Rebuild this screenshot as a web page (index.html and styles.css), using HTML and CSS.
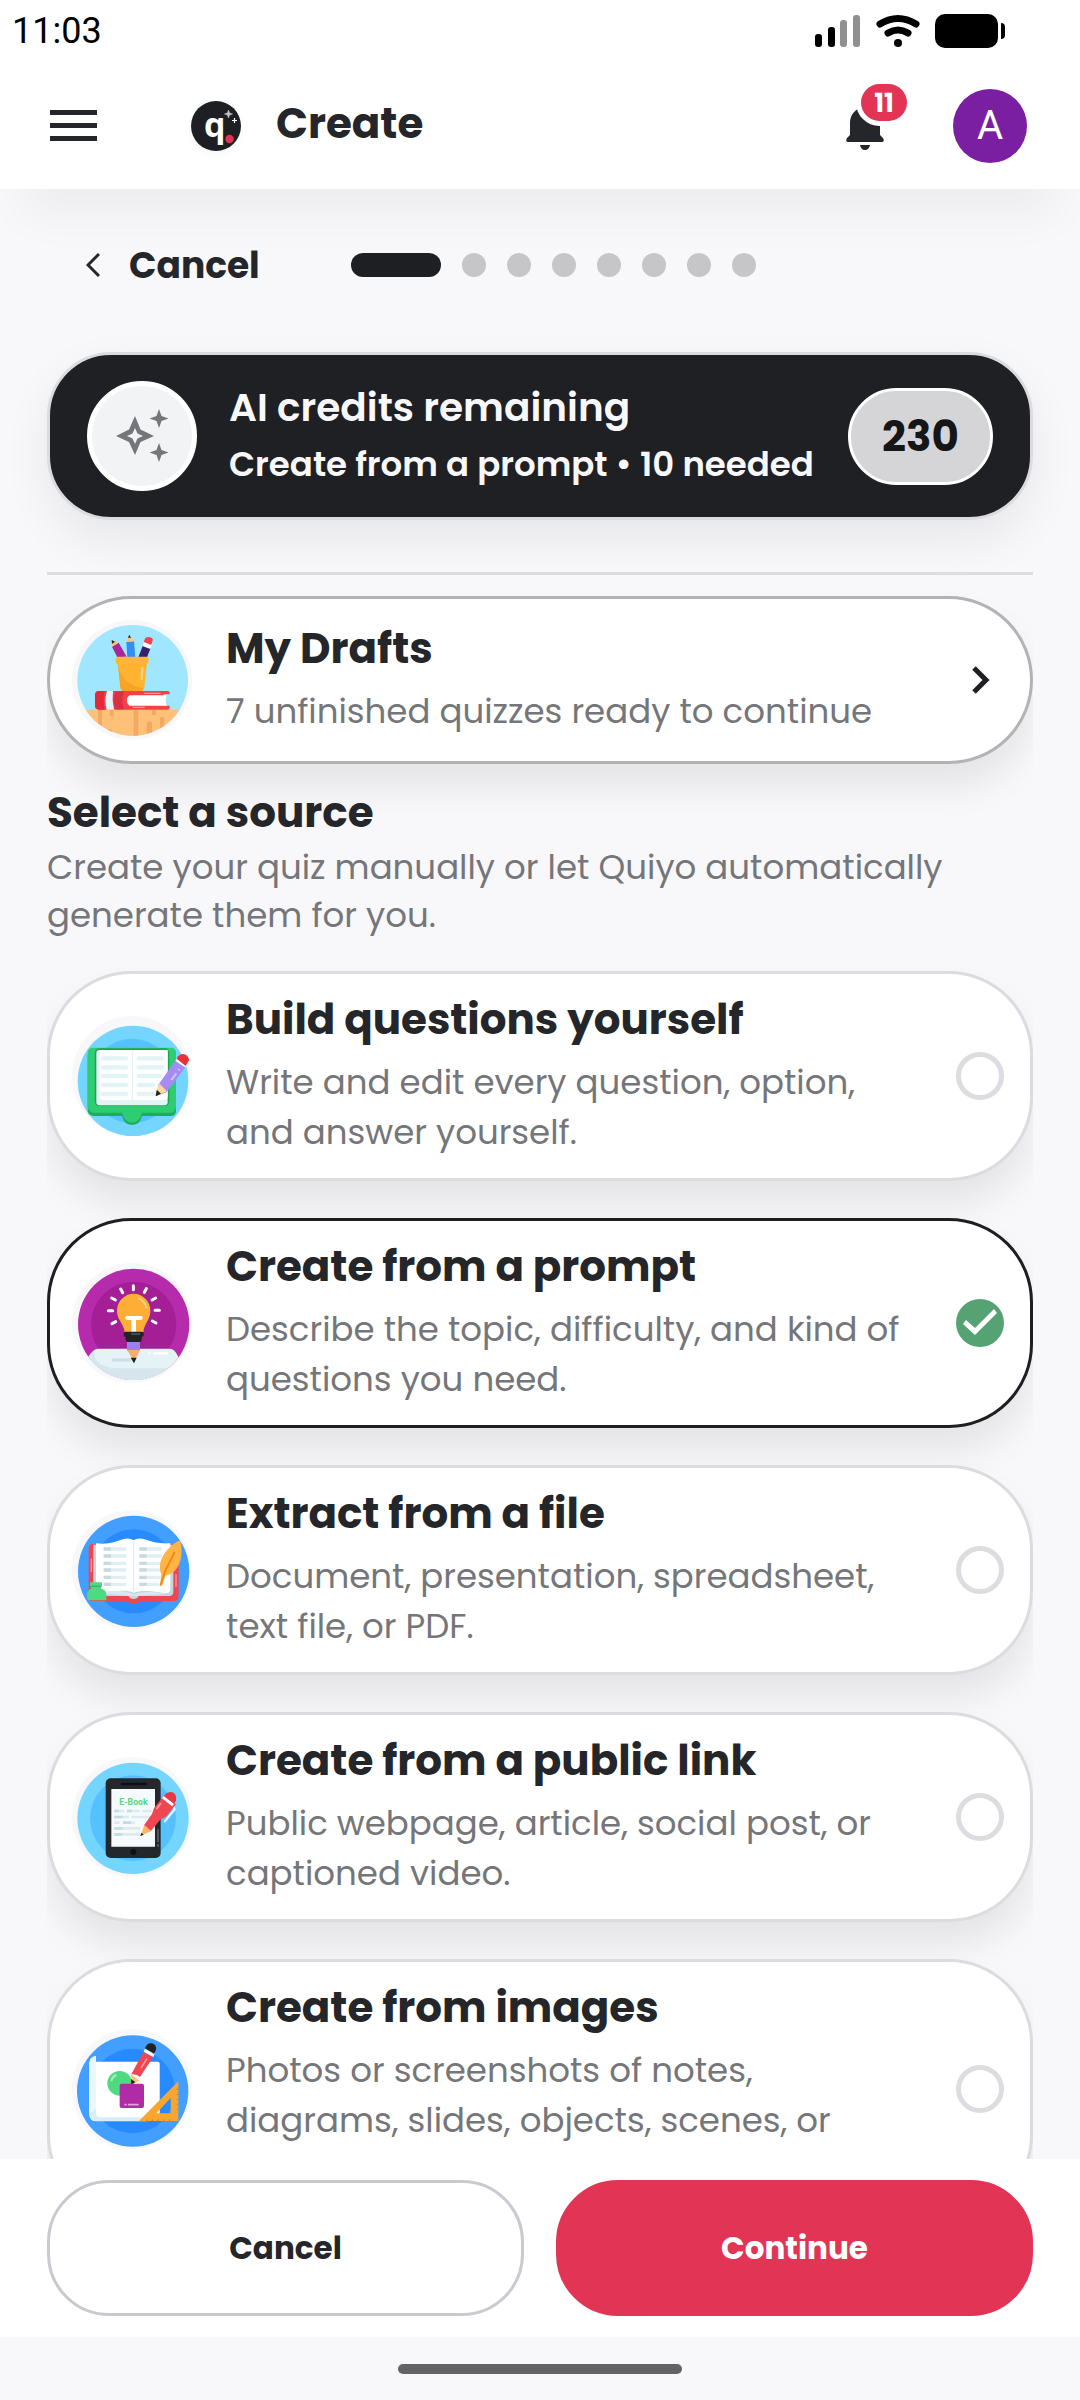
FILE: index.html
```html
<!DOCTYPE html>
<html lang="en">
<head>
    <meta charset="UTF-8">
    <meta name="viewport" content="width=device-width, initial-scale=1.0">
    <title>Create</title>
    <link rel="stylesheet" href="styles.css">
</head>
<body>
    <div class="status-bar">
        <span class="time">11:03</span>
        <div class="status-icons">
            <svg width="46" height="34" viewBox="0 0 46 34">
                <rect x="0" y="20" width="7" height="13" rx="3"/>
                <rect x="13" y="13" width="7" height="20" rx="3"/>
                <rect x="25" y="6" width="7" height="27" rx="3" fill="#909090"/>
                <rect x="38" y="1" width="7" height="32" rx="3" fill="#909090"/>
            </svg>
            <svg width="44" height="34" viewBox="0 0 44 34">
                <path d="M4 10Q22-1 40 10M12 19Q22 13 32 19" fill="none" stroke="#000" stroke-width="7" stroke-linecap="round"/>
                <circle cx="22" cy="29" r="4"/>
            </svg>
            <svg width="70" height="34" viewBox="0 0 70 34">
                <rect width="63" height="34" rx="10"/>
                <path d="M66 9q4 0 4 4v8q0 4-4 4z"/>
            </svg>
        </div>
    </div>

    <header class="header">
        <button class="icon-btn menu" aria-label="Menu">
            <svg width="47" height="32" viewBox="0 0 47 32" fill="#242629"><path d="M0 0h47v5H0zM0 13h47v5H0zM0 26h47v5H0z"/></svg>
        </button>
        <svg class="logo" width="50" height="50" viewBox="0 0 50 50">
            <circle cx="25" cy="25" r="25" fill="#1d1f22"/>
            <text x="13" y="36" class="logo-letter">q</text>
            <circle cx="38.500" cy="38" r="4.200" fill="#e23455"/>
            <path d="M37.500 9l1 3 3 1-3 1-1 3-1-3-3-1 3-1z" fill="#c4c4c6" stroke="#c4c4c6" stroke-width=".6"/>
            <path d="M43.500 17v5M41 19.500h5" stroke="#fff" stroke-width="1.200"/>
        </svg>
        <h1 class="page-title">Create</h1>
        <button class="icon-btn bell" aria-label="Notifications">
            <svg width="38" height="48" viewBox="0 0 38 48" fill="#242629">
                <path d="M19 4C10 6 4 12 4 21v12l-3 3q-2 4 1 4h34q3 0 1-4l-3-3V21C34 12 28 6 19 4zM14 43h10q-1 5-5 5t-5-5z"/>
            </svg>
            <span class="badge">11</span>
        </button>
        <button class="avatar">A</button>
    </header>

    <main class="main">
        <nav class="steps">
            <button class="back">
                <svg width="14" height="24" viewBox="0 0 14 24"><path d="M13 1L2 12l11 11" fill="none" stroke="#242629" stroke-width="3"/></svg>
                Cancel
            </button>
            <div class="dots">
                <span class="dot active"></span>
                <span class="dot"></span>
                <span class="dot"></span>
                <span class="dot"></span>
                <span class="dot"></span>
                <span class="dot"></span>
                <span class="dot"></span>
                <span class="dot"></span>
            </div>
        </nav>

        <section class="credits">
            <div class="credits-icon">
                <svg width="54" height="56" viewBox="0 0 54 56" fill="#75767a">
                    <path fill-rule="evenodd" d="M20 8l5.500 13.500L39 28l-13.500 6L20 47l-6-13L1 28l13-6.500zM20 20l-2.500 5.500L12 28l5.500 2.500L20 36l2.500-5.500L28 28l-5.500-2.500z"/>
                    <path d="M44 1l2.500 7 7 2.500-7 2.500-2.500 7-2.500-7-7-2.500 7-2.500zM44 35l2.500 7 7 2.500-7 2.500-2.500 7-2.500-7-7-2.500 7-2.500z"/>
                </svg>
            </div>
            <div class="credits-text">
                <p class="credits-title">AI credits remaining</p>
                <p class="credits-sub">Create from a prompt • 10 needed</p>
            </div>
            <span class="credits-count">230</span>
        </section>

        <div class="content">
            <a class="card drafts" href="#">
                <svg class="art" viewBox="126 120 360 360">
                    <defs><clipPath id="desk"><circle cx="308" cy="301" r="166"/></clipPath></defs>
                    <circle cx="306" cy="300" r="180" fill="#f8f8fa"/>
                    <circle cx="308" cy="301" r="166" fill="#a0e6ff"/>
                    <g clip-path="url(#desk)">
                        <path d="M126 389h360v100H126z" fill="#ffc078"/>
                        <path d="M204 389h12v46h-12zM239 389h12v20h-12zM311 389h14v90h-14zM366 389h12v16h-12zM350 428q8-10 16 0v40h-16zM390 412h13v50h-13zM233 448h12v30h-12z" fill="#f3a964"/>
                    </g>
                    <path d="M246 200l20-12 24 42-28 2z" fill="#a8279c"/>
                    <path d="M246 200l-1-20 21 8z" fill="#ffc078"/><path d="M245 180l10 5-9 6z" fill="#222"/>
                    <path d="M289 186l23-2 4 48h-24z" fill="#348cf5"/><path d="M289 186l9-20 14 18z" fill="#ffc078"/><path d="M298 164l5 9h-9z" fill="#222"/>
                    <path d="M340 193l22 10-11 29h-26z" fill="#35206b"/><path d="M337 198l7-17 23 9-6 17z" fill="#fff"/><path d="M341 186l5-12q14-7 23 4l-5 17z" fill="#ef4350"/>
                    <path d="M262 240h90l-9 82q-1 12-12 12h-47q-12 0-13-12z" fill="#ffb330"/>
                    <path d="M264 250c4 44 34 68 76 75l-4 8h-52q-12 0-13-12z" fill="#f7a327"/>
                    <rect x="257" y="230" width="99" height="22" rx="7" fill="#ffb43b"/>
                    <path d="M337 262l-2 38" stroke="#ffd37f" stroke-width="7"/>
                    <path d="M207 333h205q9 0 7 10h-18v34h18q2 12-8 12H207q-12 0-12-13v-30q0-13 12-13z" fill="#f0414c"/>
                    <path d="M207 333h17q-6 28 0 56h-17q-12 0-12-13v-30q0-13 12-13z" fill="#e12b37"/>
                    <path d="M231 333h18q-4 28 3 56h-22q-8-28 1-56z" fill="#e8f3f7"/>
                    <path d="M257 334h25q-9 28 0 54h-25q-12-27 0-54z" fill="#db303f"/>
                    <path d="M298 346h112q-6 16 0 31H298q-16-15 0-31z" fill="#fff"/>
                    <path d="M342 340h50M308 382h36" stroke="#f998a0" stroke-width="4"/>
                </svg>
                <div class="card-text">
                    <h2 class="card-title">My Drafts</h2>
                    <p class="card-desc">7 unfinished quizzes ready to continue</p>
                </div>
                <span class="card-end"><svg width="20" height="30" viewBox="0 0 20 30"><path d="M4 3l12 12L4 27" fill="none" stroke="#1d1f22" stroke-width="5"/></svg></span>
            </a>

            <h2 class="section-title">Select a source</h2>
            <p class="section-desc">Create your quiz manually or let Quiyo automatically generate them for you.</p>

            <form class="sources" id="sources">
                <label class="card">
                    <svg class="art" viewBox="126 168 360 360">
                        <circle cx="306" cy="348" r="180" fill="#f8f8fa"/>
                        <circle cx="309" cy="363" r="166" fill="#74d6ff"/>
                        <circle cx="306" cy="363" r="127" fill="#55c2ff"/>
                        <path d="M190 270h234q14 0 14 14v168q0 16-16 16h-86q-6 26-30 27-24-1-30-27h-86q-17-2-17-18V286q0-16 17-16z" fill="#1bae57"/>
                        <path d="M190 263h232q16 0 16 14v163q-2 18-18 18h-84q-6 28-30 30-24-2-30-30h-86q-15-3-17-18V280q0-17 17-17z" fill="#2fcd72"/>
                        <rect x="194" y="265" width="224" height="173" rx="14" fill="#1ba655"/>
                        <rect x="199" y="270" width="214" height="166" rx="10" fill="#e4f4f6"/>
                        <path d="M209 270h96v150h-85q-11 0-11-12zM309 270h104v138q0 12-12 12h-92z" fill="#fff"/>
                        <path d="M218 295h70M218 322h70M218 348h70M218 375h70M218 402h70M326 295h70M326 322h70M326 348h66M326 375h44M326 402h46" stroke="#e2f4f6" stroke-width="13" stroke-linecap="round"/>
                        <path d="M435 303l30 20-55 74-31 11 6-34z" fill="#a78bf5"/>
                        <path d="M387 370l24 24-33 14z" fill="#ffd898"/><path d="M380 389l13 12-16 8z" fill="#222"/>
                        <path d="M436 302l30 20 5-10-28-20z" fill="#fff"/>
                        <path d="M440 296q6-14 20-14 16 3 17 19l-10 17z" fill="#ea303a"/>
                        <path d="M424 360l15-20M445 331l3-4" stroke="#d3c4ff" stroke-width="6"/>
                    </svg>
                    <div class="card-text">
                        <h3 class="card-title">Build questions yourself</h3>
                        <p class="card-desc">Write and edit every question, option, and answer yourself.</p>
                    </div>
                    <span class="card-end"><input class="radio" type="radio" name="source"></span>
                </label>

                <label class="card selected">
                    <svg class="art" viewBox="126 189 360 360">
                        <defs><clipPath id="bulb"><circle cx="311" cy="373" r="167"/></clipPath></defs>
                        <circle cx="306" cy="369" r="180" fill="#f8f8fa"/>
                        <circle cx="311" cy="373" r="167" fill="#b52bab"/>
                        <circle cx="311" cy="373" r="128" fill="#a41f95"/>
                        <g clip-path="url(#bulb)">
                            <path d="M204 446h216q14 0 24 23l4 80H170l6-80q14-23 28-23z" fill="#e5f3f7"/>
                            <path d="M194 450c-8 40 30 55 80 55h150v45H160l16-80z" fill="#d6e6ec"/>
                        </g>
                        <path d="M246 480h56" stroke="#cfdfe6" stroke-width="9"/>
                        <path d="M310 257v12M272 267l6 11M349 266l-6 11M245 294l11 6M377 294l-11 6M235 332h13M375 331h13M246 371l11-6M378 369l-11-6" stroke="#fff" stroke-width="9" stroke-linecap="round"/>
                        <path d="M311 281a51 51 0 0 1 50 51c0 28-18 36-21 64h-56c-3-28-23-36-23-64a51 51 0 0 1 50-51z" fill="#ffae35"/>
                        <path d="M325 294q20 10 25 30" fill="none" stroke="#ffdc9b" stroke-width="5"/>
                        <path d="M289 348h45q4 0 4 6t-10 6h-10v38h-14v-38h-8q-11-1-11-6t4-6z" fill="#fff"/>
                        <rect x="281" y="395" width="60" height="16" rx="6" fill="#202225"/>
                        <path d="M287 409h48v10q-2 8-12 8h-25q-10-1-11-8z" fill="#202225"/><path d="M303 402h28" stroke="#6d7074" stroke-width="3"/>
                        <path d="M291 426h39v26h-39z" fill="#a37cf0"/><path d="M292 450h38l-18 37z" fill="#f7ad72"/><path d="M302 473h18l-8 17z" fill="#222"/>
                        <path d="M370 460h44M356 460h5" stroke="#fff" stroke-width="7"/>
                    </svg>
                    <div class="card-text">
                        <h3 class="card-title">Create from a prompt</h3>
                        <p class="card-desc">Describe the topic, difficulty, and kind of questions you need.</p>
                    </div>
                    <span class="card-end"><input class="radio" type="radio" name="source" checked></span>
                </label>

                <label class="card">
                    <svg class="art" viewBox="126 180 360 360">
                        <circle cx="306" cy="360" r="180" fill="#f8f8fa"/>
                        <circle cx="311" cy="364" r="167" fill="#429fff"/>
                        <circle cx="311" cy="364" r="126" fill="#278aff"/>
                        <path d="M188 282h246q12 0 12 12v146q0 13-13 13H330q-6 9-19 9t-19-9H184q-8 0-8-12V294q0-12 12-12z" fill="#f04652"/>
                        <path d="M190 284h240v142q0 12-12 12h-92q-4 9-15 9t-15-9H190z" fill="#bfd7df"/>
                        <path d="M198 280c36 4 60-4 80-12q20-6 33 3 12-9 33-3c20 8 45 14 77 12v138q0 12-14 12c-50-8-75-10-96-2-20-10-64-6-113 2z" fill="#fff"/>
                        <path d="M198 430c60-12 92-6 113 4 20-10 60-10 98-2l-94 6h-9z" fill="#dbe9ed"/>
                        <path d="M311 272v150" stroke="#e3edf0" stroke-width="4"/>
                        <path d="M221 297h68M221 318h68M221 340h68M221 360h68M221 382h68M221 403h68M328 297h68M328 318h68M328 340h68M328 360h66M328 382h64M328 403h60" stroke="#e2eff2" stroke-width="10"/>
                        <path d="M221 297h22M221 318h22M221 340h22M221 360h22M221 382h22M221 403h22M328 297h22M328 318h22M328 340h22M328 360h22M328 382h22M328 403h22" stroke="#c8dade" stroke-width="10"/>
                        <path d="M445 273c-36 20-66 60-51 100l-4 34h6l10-30c50-10 54-70 45-104z" fill="#ffb445"/>
                        <path d="M434 306l-30 60-12 40" fill="none" stroke="#f18c0d" stroke-width="6"/>
                        <path d="M184 326v40M438 372v38" stroke="#ff9aa3" stroke-width="4"/>
                        <path d="M180 397h36v12l-4 6c10 4 17 9 17 18v18h-48q-10 0-10-11c0-14 4-20 13-25l-4-8z" fill="#50d981"/>
                        <path d="M182 409h30" stroke="#2ab863" stroke-width="4"/>
                    </svg>
                    <div class="card-text">
                        <h3 class="card-title">Extract from a file</h3>
                        <p class="card-desc">Document, presentation, spreadsheet, text file, or PDF.</p>
                    </div>
                    <span class="card-end"><input class="radio" type="radio" name="source"></span>
                </label>

                <label class="card">
                    <svg class="art" viewBox="126 171 360 360">
                        <circle cx="306" cy="351" r="180" fill="#f8f8fa"/>
                        <circle cx="309" cy="355" r="167" fill="#74d6ff"/>
                        <circle cx="309" cy="355" r="129" fill="#55c2ff"/>
                        <rect x="227" y="235" width="165" height="239" rx="15" fill="#24282c"/>
                        <path d="M244 267h131v173H244z" fill="#f5fbfc"/>
                        <path d="M276 252h50M334 252h12" stroke="#0c0e10" stroke-width="8" stroke-linecap="round"/>
                        <circle cx="310" cy="456" r="9" fill="#0c0e10"/>
                        <path d="M384 388v38M384 432v8" stroke="#6b7075" stroke-width="4"/>
                        <text x="268" y="314" class="ebook">E-Book</text>
                        <path d="M253 333h29M291 333h38M337 333h28M253 351h44M304 351h60M253 368h16M279 368h36M253 385h78M253 403h78" stroke="#dcebef" stroke-width="8"/>
                        <path d="M253 333h14M291 333h14M253 351h24M279 368h24M253 385h24M253 403h24" stroke="#c3dbe2" stroke-width="8"/>
                        <path d="M430 320l4 8-31 38" fill="none" stroke="#e9f5fa" stroke-width="6"/>
                        <path d="M404 284l-32 40-6 18-24 34 20 18 30-36 16-8 30-38z" fill="#f04652"/>
                        <path d="M403 286q12-15 28-8 10 8 7 24l-8 11z" fill="#e93842"/>
                        <path d="M401 288l31 24-6 7-30-24z" fill="#fff"/>
                        <path d="M343 375l21 18-32 14z" fill="#ffb466"/><path d="M334 398l7 6-10 4z" fill="#222"/>
                        <path d="M393 310l-14 18" stroke="#ff9aa3" stroke-width="5"/>
                    </svg>
                    <div class="card-text">
                        <h3 class="card-title">Create from a public link</h3>
                        <p class="card-desc">Public webpage, article, social post, or captioned video.</p>
                    </div>
                    <span class="card-end"><input class="radio" type="radio" name="source"></span>
                </label>

                <label class="card">
                    <svg class="art" viewBox="126 264 360 360">
                        <circle cx="306" cy="444" r="180" fill="#f8f8fa"/>
                        <circle cx="308" cy="450" r="167" fill="#429fff"/>
                        <circle cx="308" cy="450" r="127" fill="#278aff"/>
                        <path d="M180 362h203q6 0 6 6v172H200q-22 0-22-22z" fill="#fff"/>
                        <path d="M198 345q-20 3-20 22v151q0 23 22 23h150v-12H210q-12 0-12-12z" fill="#daeef6"/>
                        <path d="M198 345v158q-10 2-14 14l-6-4V367q0-19 20-22z" fill="#eaf7fb"/>
                        <circle cx="269" cy="427" r="37" fill="#50d981"/>
                        <path d="M244 420q3-14 15-18" fill="none" stroke="#a5f0c0" stroke-width="6"/>
                        <path d="M303 400l25 19-22 11z" fill="#ffc078"/><path d="M303 414l13 9-12 9z" fill="#222"/>
                        <path d="M340 333l30 14-40 61q-10-10-26-8z" fill="#ef4652"/>
                        <path d="M341 332l4-9 29 15-4 10z" fill="#fff"/>
                        <path d="M345 322q6-18 21-15 15 5 12 20l-6 11z" fill="#222"/>
                        <path d="M351 353l-18 28" stroke="#ff9aa3" stroke-width="5"/>
                        <rect x="269" y="428" width="73" height="73" rx="6" fill="#b02ba5"/>
                        <path d="M283 491h7M294 491h32" stroke="#e2a2dc" stroke-width="5"/>
                        <path fill-rule="evenodd" d="M445 421v119H327zM422 471l-43 46h43z" fill="#f9a62e"/>
                        <path d="M440 445h5M440 460h5M440 475h5M440 490h5M440 505h5M350 535v5M367 535v5M384 535v5M401 535v5M418 535v5" stroke="#d57f0b" stroke-width="3"/>
                    </svg>
                    <div class="card-text">
                        <h3 class="card-title">Create from images</h3>
                        <p class="card-desc">Photos or screenshots of notes, diagrams, slides, objects, scenes, or more.</p>
                    </div>
                    <span class="card-end"><input class="radio" type="radio" name="source"></span>
                </label>
            </form>
        </div>
    </main>

    <footer class="actions">
        <button class="btn btn-outline" type="button">Cancel</button>
        <button class="btn btn-primary" type="submit" form="sources">Continue</button>
    </footer>
    <div class="home-bar"><span class="home-handle"></span></div>
</body>
</html>
```
FILE: styles.css
```css
* { box-sizing: border-box; }
body { margin: 0; height: 100vh; display: flex; flex-direction: column; overflow: hidden; font-family: Poppins, Inter, sans-serif; color: #242629; background: #f8f8fa; }
h1, h2, h3, p { margin: 0; }
button { font-family: inherit; color: inherit; border: 0; padding: 0; background: none; cursor: pointer; }
svg { display: block; flex-shrink: 0; }

/* status bar */
.status-bar { display: flex; justify-content: space-between; align-items: center; height: 62px; padding: 0 75px 0 12px; background: #fff; position: relative; z-index: 2; }
.time { font-family: Roboto, sans-serif; font-size: 36px; color: #000; }
.status-icons { display: flex; gap: 15px; }

/* header */
.header { display: flex; align-items: center; height: 127px; padding: 0 53px 0 50px; background: #fff; position: relative; z-index: 1; box-shadow: 0 48px 48px -24px rgba(0,0,0,0.05); }
.logo { margin-left: 94px; border-radius: 50%; box-shadow: 0 4px 8px rgba(0,0,0,0.04); overflow: visible; }
.logo-letter { font: bold 34px "Open Sans", sans-serif; fill: #fff; }
.page-title { flex: 1; margin-left: 35px; padding-bottom: 4px; font-size: 42px; font-weight: 700; line-height: 50px; }
.bell { position: relative; margin-right: 69px; }
.badge { position: absolute; left: 15px; top: -18px; width: 46px; height: 37px; border-radius: 19px; background: #e23455; box-shadow: 0 0 0 5px #fff; color: #fff; font-size: 26px; font-weight: 700; line-height: 38px; text-align: center; }
.avatar { width: 74px; height: 74px; border-radius: 50%; background: #7b1fa2; color: #fff; font-family: Roboto, sans-serif; font-size: 40px; }

/* main */
.main { flex: 1; min-height: 0; overflow: hidden; }
.steps { display: flex; align-items: center; gap: 91px; height: 72px; margin: 40px 86px 51px; }
.back { display: flex; align-items: center; gap: 29px; font-size: 36px; font-weight: 700; }
.dots { display: flex; gap: 21px; }
.dot { width: 24px; height: 24px; border-radius: 12px; background: #c6c6c8; }
.dot.active { width: 90px; background: #1d1f22; }

.credits { display: flex; align-items: center; height: 168px; margin: 0 47px; padding: 0 37px; border: 3px solid #dcdce0; border-radius: 64px; background: #1f2024; box-shadow: 0 20px 48px rgba(0,0,0,0.07); color: #f8f8fa; }
.credits-icon { display: flex; align-items: center; justify-content: center; width: 110px; height: 110px; border: 5px solid #fff; border-radius: 50%; background: #f2f3f4; }
.credits-text { flex: 1; margin-left: 32px; line-height: 50px; white-space: nowrap; }
.credits-title { font-size: 39px; font-weight: 600; margin-bottom: 6px; }
.credits-sub { font-size: 34px; font-weight: 600; }
.credits-count { width: 145px; height: 97px; border: 3px solid #fff; border-radius: 49px; background: #d5d5d8; color: #151618; font-size: 42px; font-weight: 700; line-height: 91px; text-align: center; }

.content { margin: 52px 47px 0; padding-top: 21px; border-top: 3px solid #dcdce0; overflow: hidden; }
.card { display: flex; align-items: center; padding: 21px 26px 21px 22px; border: 3px solid #dcdce0; border-radius: 84px; background: #fff; box-shadow: 0 24px 36px rgba(0,0,0,0.08); color: #242629; text-decoration: none; cursor: pointer; }
.card.drafts { min-height: 168px; border-color: #b3b3b6; }
.card.selected { border-color: #1d1f22; }
.art { width: 120px; height: 120px; }
.ebook { font: bold 26px Roboto, sans-serif; fill: #50d981; }
.card-text { flex: 1; margin: 0 40px 0 34px; line-height: 50px; }
.card-title { font-size: 42px; font-weight: 700; margin-bottom: 12px; }
.card-desc { font-size: 34px; color: #75767a; }
.card-end { display: flex; justify-content: center; width: 48px; }
.radio { appearance: none; width: 48px; height: 48px; margin: 0; border: 5px solid #dcdce1; border-radius: 50%; }
.radio:checked { border: 0; background: #55a272; }
.radio:checked::after { content: ""; display: block; width: 48px; height: 48px; background: #fff; clip-path: polygon(7px 25px, 10px 21px, 19px 29px, 38px 10px, 41px 14px, 19px 36px); }

.section-title { margin-top: 25px; font-size: 42px; font-weight: 700; line-height: 48px; }
.section-desc { margin: 6px 0 32px; font-size: 34px; line-height: 48px; color: #75767a; }
.sources { display: flex; flex-direction: column; gap: 37px; }

/* bottom actions */
.actions { display: flex; gap: 32px; padding: 21px 47px; background: #fff; }
.btn { flex: 1; height: 136px; border: 3px solid #c9c9cf; border-radius: 62px; font-size: 31px; font-weight: 700; }
.btn-primary { border-color: #e23455; background: #e23455; color: #fff; }
.home-bar { display: flex; justify-content: center; height: 63px; padding-top: 27px; }
.home-handle { width: 284px; height: 10px; border-radius: 5px; background: #636363; }
```
